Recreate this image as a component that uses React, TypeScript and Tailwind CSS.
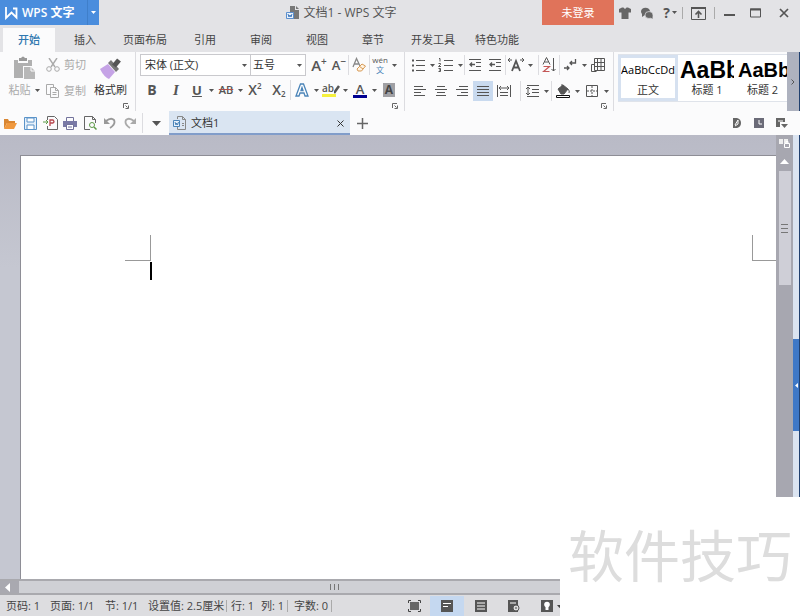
import React, { useState } from "react";

interface TabItem {
  label: string;
  wide?: boolean;
}

const TABS: TabItem[] = [
  { label: "开始" },
  { label: "插入" },
  { label: "页面布局", wide: true },
  { label: "引用" },
  { label: "审阅" },
  { label: "视图" },
  { label: "章节" },
  { label: "开发工具", wide: true },
  { label: "特色功能", wide: true },
];

const Svg: React.FC<{ w?: number; h?: number; children: React.ReactNode }> = ({
  w = 16,
  h = 16,
  children,
}) => (
  <svg
    width={w}
    height={h}
    viewBox={`0 0 ${w} ${h}`}
    fill="none"
    stroke="currentColor"
    className="shrink-0"
    aria-hidden="true"
  >
    {children}
  </svg>
);

const Caret = () => (
  <Svg w={5} h={3}>
    <path d="M0 0h5L2.5 3z" fill="currentColor" stroke="none" />
  </Svg>
);

const Divider = () => <span className="h-5 w-px shrink-0 bg-[#dcdce0]" />;

const Tool: React.FC<{
  label: string;
  drop?: boolean;
  active?: boolean;
  children: React.ReactNode;
}> = ({ label, drop, active, children }) => (
  <button
    aria-label={label}
    title={label}
    className={`flex h-5 shrink-0 items-center ${active ? "bg-[#c9daef]" : ""}`}
  >
    <span className="flex w-5 items-center justify-center">{children}</span>
    {drop && (
      <span className="flex w-2 justify-center">
        <Caret />
      </span>
    )}
  </button>
);

const Launcher: React.FC<{ label: string }> = ({ label }) => (
  <button aria-label={label} className="absolute right-1.5 bottom-0.5 text-[#666]">
    <Svg w={6} h={6}>
      <path d="M.5 5V.5H5M2.5 2.5l2 2M5.5 2.5v3h-3" />
    </Svg>
  </button>
);

// horizontal strokes, each given as x1, x2, y
const Lines: React.FC<{ rows: number[][] }> = ({ rows }) => (
  <Svg>
    <path d={rows.map(([a, b, y]) => `M${a} ${y}H${b}`).join("")} />
  </Svg>
);

function TitleBar() {
  return (
    <header className="flex h-[25px] shrink-0 items-center text-[#555]">
      <button className="flex w-[87px] items-center gap-1 self-stretch bg-[#4a8ddd] pl-1 text-[12px] font-semibold text-white">
        <Svg w={14} h={14}>
          <path d="M2 1v11l5.500-5.500 5 5V2.500H9" strokeWidth="1.800" />
        </Svg>
        WPS 文字
      </button>
      <button
        aria-label="主菜单"
        className="flex w-3 items-center justify-center self-stretch border-l border-[#3f7fca] bg-[#4a8ddd] text-white"
      >
        <Caret />
      </button>
      <div className="flex flex-1 items-center justify-center gap-1 pl-10 text-[12px] leading-4">
        <Svg w={15} h={14}>
          <path d="M5 0h5v4h4v9H5z" fill="#777" stroke="none" />
          <path d="M11 0l3 3h-3z" fill="#777" stroke="none" />
          <path d="M1.500 6.500h7v6h-7z" fill="#eaf2fb" stroke="#5b8fce" />
          <path d="M3 8l1 3 1-2 1 2 1-3" stroke="#3f78bd" />
        </Svg>
        <h1>文档1 - WPS 文字</h1>
      </div>
      <div className="flex items-center justify-end self-stretch">
        <button className="w-[72px] self-stretch bg-[#e0735a] text-[11px] text-white">
          未登录
        </button>
        <button aria-label="皮肤" className="flex w-[22px] justify-center">
          <Svg w={12} h={12}>
            <path
              d="M0 2l3-1.500h1.500Q6 3 7.500.5H9L12 2v3.500h-2.500V12h-7V5.500H0z"
              fill="#666"
              stroke="none"
            />
          </Svg>
        </button>
        <button aria-label="反馈" className="flex w-[22px] justify-center">
          <Svg w={12} h={12}>
            <ellipse cx="4.500" cy="4.500" rx="4.500" ry="3.800" fill="#666" stroke="none" />
            <path d="M1 6v4l3-2z" fill="#666" stroke="none" />
            <ellipse cx="8" cy="8" rx="4" ry="3.500" fill="#666" stroke="#e3e3e6" strokeWidth=".7" />
            <path d="M9 10l2.500 2V8z" fill="#666" stroke="none" />
          </Svg>
        </button>
        <button
          aria-label="帮助"
          className="flex w-6 items-center justify-center gap-0.5 text-[14px] font-bold"
        >
          ?
          <Caret />
        </button>
        <span className="h-3 w-px bg-[#aaa]" />
        <button aria-label="隐藏功能区" className="flex w-[31px] justify-center">
          <Svg w={15} h={14}>
            <path d="M.5 1.500h14v12H.5z" />
            <path d="M0 2h15" strokeWidth="2" />
            <path d="M7.500 12V6M4.500 8.500l3-3 3 3" strokeWidth="1.600" />
          </Svg>
        </button>
        <span className="h-3 w-px bg-[#aaa]" />
        <button aria-label="最小化" className="flex w-7 justify-center">
          <Svg w={11} h={12}>
            <path d="M0 8h11" strokeWidth="2" />
          </Svg>
        </button>
        <button aria-label="最大化" className="flex w-6 justify-center">
          <Svg w={11} h={10}>
            <path d="M.5 1h10v8H.5z" />
            <path d="M0 1.500h11" strokeWidth="2" />
          </Svg>
        </button>
        <button aria-label="关闭" className="flex w-[33px] justify-center">
          <Svg w={10} h={10}>
            <path d="M1 1l8 8M9 1L1 9" strokeWidth="1.700" />
          </Svg>
        </button>
      </div>
    </header>
  );
}

function ClipboardGroup() {
  return (
    <section
      aria-label="剪贴板"
      className="relative flex w-[136px] shrink-0 border-r border-[#dcdce0] pl-0.5 text-[#aaa]"
    >
      <button className="flex w-11 flex-col items-center gap-0.5 pt-1">
        <Svg w={22} h={24}>
          <path d="M1 4h4v3h10V4h4v6h-9v12H1z" fill="#b0b0b0" stroke="none" />
          <path d="M6 5V2h2q2-3 4 0h2v3z" fill="#999" stroke="none" />
          <path d="M11 11h7l4 4v8H11z" fill="#b8b8b8" stroke="none" />
          <path d="M18 11v4h4" stroke="#fbfbfc" />
        </Svg>
        <span className="flex items-center gap-1">
          粘贴
          <span className="text-[#555]">
            <Caret />
          </span>
        </span>
      </button>
      <div className="flex flex-col gap-1.5 pt-[3px]">
        <button className="flex h-5 items-center gap-1">
          <Svg w={14} h={14}>
            <path d="M3 0l6 9M11 0L5 9" strokeWidth="1.400" />
            <circle cx="3" cy="11" r="2.300" />
            <circle cx="11" cy="11" r="2.300" />
          </Svg>
          剪切
        </button>
        <button className="flex h-5 items-center gap-1">
          <Svg w={14} h={14}>
            <path d="M4 10.500H.5V.5h7V3" />
            <path d="M4.500 3.500h5l3 3v7h-8zM9.500 3.500v3h3M6.500 8.500h4M6.500 10.500h4" />
          </Svg>
          复制
        </button>
      </div>
      <button className="flex flex-1 flex-col items-center gap-0.5 pt-1 text-[#333]">
        <Svg w={22} h={24}>
          <path d="M0 13l8-5 7 8-6 7q-5-2-9-10z" fill="#c5a3e6" stroke="none" />
          <path d="M8 7l3-3 8 9-3 3z" fill="#777" stroke="none" />
          <path d="M14 10l5-6" stroke="#555" strokeWidth="5" />
        </Svg>
        格式刷
      </button>
      <Launcher label="剪贴板设置" />
    </section>
  );
}

function FontGroup() {
  return (
    <section
      aria-label="字体"
      className="relative flex w-[269px] shrink-0 flex-col gap-1 border-r border-[#dcdce0] pt-0.5 pl-1"
    >
      <div className="flex items-center">
        <label className="relative flex items-center">
          <select
            aria-label="字体名称"
            className="h-[22px] w-[111px] appearance-none border border-[#c9c9cd] bg-white px-1 text-[11px] text-[#333]"
          >
            <option>宋体 (正文)</option>
            <option>黑体</option>
          </select>
          <span className="pointer-events-none absolute right-1">
            <Caret />
          </span>
        </label>
        <label className="relative flex items-center">
          <select
            aria-label="字号"
            className="h-[22px] w-[55px] appearance-none border border-l-0 border-[#c9c9cd] bg-white px-0.5 text-[11px] text-[#333]"
          >
            <option>五号</option>
            <option>四号</option>
          </select>
          <span className="pointer-events-none absolute right-1">
            <Caret />
          </span>
        </label>
        <Tool label="增大字号">
          <span className="ml-1.5 flex items-start text-[15px] leading-4 font-semibold">
            A<sup className="top-0 text-[10px] leading-2">+</sup>
          </span>
        </Tool>
        <Tool label="减小字号">
          <span className="ml-1.5 flex items-start text-[13px] leading-4 font-semibold">
            A<sup className="top-0 text-[10px] leading-2">−</sup>
          </span>
        </Tool>
        <span className="w-0.5" />
        <Divider />
        <Tool label="清除格式">
          <Svg w={14} h={16}>
            <path d="M1 10L4.500 1.500 8 9M2.500 7h4" stroke="#888" strokeWidth="1.300" />
            <path d="M5 12l5-5 3.500 2-4 5H6z" fill="#fff4e4" stroke="#d79a55" />
            <path d="M7 9l4 3" stroke="#d79a55" />
          </Svg>
        </Tool>
        <Divider />
        <Tool label="拼音指南" drop>
          <span className="flex flex-col text-center text-[8px]">
            <span className="leading-[9px]">wén</span>
            <span className="leading-[11px] text-[#4b84b8]">文</span>
          </span>
        </Tool>
      </div>
      <div className="flex items-center gap-px pl-0.5">
        <Tool label="加粗">
          <b className="text-[14px]">B</b>
        </Tool>
        <span className="w-0.5" />
        <Tool label="倾斜">
          <i className="font-['Liberation_Serif'] text-[15px] font-semibold">I</i>
        </Tool>
        <Tool label="下划线" drop>
          <u className="text-[13px] font-bold">U</u>
        </Tool>
        <Tool label="删除线" drop>
          <s className="text-[11px] font-semibold decoration-[#b0504c]">AB</s>
        </Tool>
        <Tool label="上标">
          <span className="flex items-start text-[14px] leading-4 font-semibold">
            X<span className="text-[8px] leading-2">2</span>
          </span>
        </Tool>
        <span className="w-0.5" />
        <Tool label="下标">
          <span className="flex items-end text-[14px] leading-4 font-semibold">
            X<span className="text-[8px] leading-2">2</span>
          </span>
        </Tool>
        <Divider />
        <Tool label="文字效果" drop>
          <Svg w={14} h={14}>
            <path
              d="M1 13L5.500 1h3L13 13h-3L9 10H5l-1 3zM6 7.500h2L7 4.500z"
              stroke="#4b84b8"
              strokeWidth="1.300"
              fill="#fff"
            />
          </Svg>
        </Tool>
        <Tool label="突出显示" drop>
          <span className="flex w-[18px] flex-col text-[10px] leading-[11px] font-semibold">
            <span className="flex items-center">
              ab
              <Svg w={6} h={11}>
                <path d="M0 10L5 3" strokeWidth="2.500" />
              </Svg>
            </span>
            <span className="h-[3px] w-3.5 bg-[#f5f03c]" />
          </span>
        </Tool>
        <Tool label="字体颜色" drop>
          <span className="flex w-3.5 flex-col text-center text-[13px] leading-3 font-semibold">
            A<span className="h-[3px] bg-[#000090]" />
          </span>
        </Tool>
        <Tool label="字符底纹">
          <span className="flex h-3.5 w-3 items-center justify-center bg-[#a0a0a4] text-[12px] font-bold text-[#444]">
            A
          </span>
        </Tool>
      </div>
      <Launcher label="字体设置" />
    </section>
  );
}

function ParagraphGroup() {
  return (
    <section
      aria-label="段落"
      className="relative flex w-[209px] shrink-0 flex-col gap-1.5 border-r border-[#dcdce0] pt-[3px] pl-[3px]"
    >
      <div className="flex items-center">
        <Tool label="项目符号" drop>
          <Svg>
            <path d="M6 3.500h9M6 8.500h9M6 13.500h9" />
            <path d="M2 3.500h2M2 8.500h2M2 13.500h2" strokeWidth="2" />
          </Svg>
        </Tool>
        <Tool label="编号" drop>
          <Svg>
            <path d="M6 3.500h9M6 8.500h9M6 13.500h9" />
            <path d="M1 1.500h1v3M.5 6.500h2v1l-2 2h2.500M.5 11.500h2v3h-2M1 13h1" />
          </Svg>
        </Tool>
        <Divider />
        <Tool label="减少缩进">
          <Svg w={12} h={12}>
            <path d="M0 .5h12M7 3.500h5M7 7.500h5M0 11.500h12" />
            <path d="M1 5.500h5M3 3.500l-2 2 2 2" strokeWidth="1.300" />
          </Svg>
        </Tool>
        <Tool label="增加缩进">
          <Svg w={12} h={12}>
            <path d="M0 .5h12M7 3.500h5M7 7.500h5M0 11.500h12" />
            <path d="M1 5.500h5M3 3.500l-2 2 2 2" strokeWidth="1.300" />
          </Svg>
        </Tool>
        <Divider />
        <Tool label="字符缩放" drop>
          <Svg>
            <path d="M4 14l4-10 4 10M5.500 10.500h5" strokeWidth="1.800" />
            <path d="M0 3h4M2 1L0 3l2 2M12 3h4M14 1l2 2-2 2" />
          </Svg>
        </Tool>
        <span className="w-1" />
        <Divider />
        <Tool label="排序">
          <Svg w={14} h={16}>
            <path d="M1 7.500L4.500.5 8 7.500M2.500 5h4" />
            <path d="M1.500 9.500h6l-6 5h6" stroke="#c45757" strokeWidth="1.200" />
            <path d="M11.500 1v13M9.500 12l2 2 2-2" />
          </Svg>
        </Tool>
        <Divider />
        <Tool label="换行标记" drop>
          <Svg w={14} h={14}>
            <path d="M12.500 1v4H7M9 3L7 5l2 2M1 10h5M4 8l2 2-2 2" strokeWidth="1.300" />
          </Svg>
        </Tool>
        <Tool label="插入表格">
          <Svg w={14} h={14}>
            <path d="M3.500.5h10v12h-10zM6.500 0v13M10 0v13M3 4.500h11M3 8.500h11M3 6.500H.5v7h5" />
          </Svg>
        </Tool>
      </div>
      <div className="flex items-center gap-px pl-0.5">
        <Tool label="左对齐">
          <Lines rows={[[2, 11, 3.5], [2, 14, 6.5], [2, 9, 9.5], [2, 13, 12.5]]} />
        </Tool>
        <Tool label="居中">
          <Lines rows={[[4, 12, 3.5], [2, 14, 6.5], [4, 12, 9.5], [3, 13, 12.5]]} />
        </Tool>
        <Tool label="右对齐">
          <Lines rows={[[5, 14, 3.5], [2, 14, 6.5], [7, 14, 9.5], [3, 14, 12.5]]} />
        </Tool>
        <Tool label="两端对齐" active>
          <Lines rows={[[2, 14, 3.5], [2, 14, 6.5], [2, 14, 9.5], [2, 14, 12.5]]} />
        </Tool>
        <Tool label="分散对齐">
          <Svg>
            <path d="M1.500 2v12M14.500 2v12M3 5h10M5 3L3 5l2 2M11 3l2 2-2 2M4 9.500h8M4 12.500h8" />
          </Svg>
        </Tool>
        <span className="w-1" />
        <Divider />
        <Tool label="行距" drop>
          <Svg>
            <path d="M3 2.500h12M8 6.500h7M8 9.500h7M3 13.500h12M4 4v8M2 6l2-2 2 2M2 10l2 2 2-2" />
          </Svg>
        </Tool>
        <Divider />
        <Tool label="底纹" drop>
          <Svg>
            <path d="M3 6l5-4 5 4-4 5H6z" fill="#555" />
            <path d="M13 6q2 2 1 4M7 1v4" />
            <path d="M1.500 12.500h13v2h-13z" stroke="#111" fill="#fff" />
          </Svg>
        </Tool>
        <Tool label="边框" drop>
          <Svg w={12} h={12}>
            <path d="M.5.5h11v11H.5z" />
            <path d="M6 1v10M1 6h10" strokeDasharray="2 1" />
          </Svg>
        </Tool>
      </div>
      <Launcher label="段落设置" />
    </section>
  );
}

function StyleGallery() {
  return (
    <section aria-label="样式" className="flex min-w-0 flex-1 pt-0.5 pl-1 text-[#333]">
      <div className="flex h-12 min-w-0 flex-1 border-y border-[#dfe3ea] bg-white">
        <button className="flex w-[60px] shrink-0 flex-col items-center overflow-hidden border-3 border-[#d6e1f0] bg-white">
          <span className="flex h-[26px] items-center text-[11px] whitespace-nowrap text-black">
            AaBbCcDd
          </span>
          <span className="leading-4">正文</span>
        </button>
        <button className="flex w-[56px] shrink-0 flex-col items-center py-[3px] pl-0.5">
          <span className="flex h-[26px] w-full items-center overflow-hidden font-['Liberation_Sans'] text-[23px] font-bold whitespace-nowrap text-black">
            AaBb
          </span>
          <span className="leading-4">标题 1</span>
        </button>
        <button className="flex min-w-0 flex-1 flex-col items-center overflow-hidden py-[3px] pl-1">
          <span className="flex h-[26px] w-full items-center overflow-hidden font-['Liberation_Sans'] text-[20px] font-bold whitespace-nowrap text-black">
            AaBb
          </span>
          <span className="leading-4">标题 2</span>
        </button>
      </div>
    </section>
  );
}

function QuickBar() {
  return (
    <div className="flex h-6 shrink-0 items-center bg-[#fbfbfc] text-[#666]">
      <Tool label="打开">
        <Svg w={14} h={13}>
          <path d="M1 12V2h4l1 2h6v2H4z" fill="#d98632" stroke="none" />
          <path d="M1 12l3-6h10l-3 6z" fill="#f0993f" stroke="none" />
        </Svg>
      </Tool>
      <Tool label="保存">
        <Svg w={13} h={13}>
          <path d="M.5.5h12v12H.5z" stroke="#5a93c9" fill="#e6f0fa" />
          <path d="M3 1h7v4H3zM3 12V8h7v4" stroke="#5a93c9" fill="#fff" />
        </Svg>
      </Tool>
      <Tool label="输出为PDF">
        <Svg w={15} h={14}>
          <path d="M4.500 4V.5h7l3 3v10h-10V10" />
          <path d="M7 10V4h3q2 2 0 3H7" stroke="#b8474e" strokeWidth="1.300" />
          <path d="M0 6h5M3 4l2 2-2 2" stroke="#5d9a46" />
        </Svg>
      </Tool>
      <Tool label="打印">
        <Svg w={14} h={13}>
          <path d="M3.500 4V.5h7V4" stroke="#73739c" />
          <path d="M0 4h14v6H0z" fill="#7a7aa6" stroke="none" />
          <path d="M3.500 7.500h7v5h-7z" fill="#fff" stroke="#73739c" />
          <path d="M5 10h4" stroke="#73739c" />
        </Svg>
      </Tool>
      <Tool label="打印预览">
        <Svg w={13} h={14}>
          <path d="M6 13.500H.5V.5h8l3 3V7M8.500.5v3h3" />
          <circle cx="8" cy="9" r="2.500" stroke="#5d9a46" />
          <path d="M10 11l2.500 2.500" stroke="#5d9a46" strokeWidth="1.500" />
        </Svg>
      </Tool>
      <Tool label="撤销">
        <Svg w={12} h={12}>
          <path d="M2 4q5-4 8-1 2 4-4 8" stroke="#999" strokeWidth="1.800" />
          <path d="M0 1v6h6z" fill="#999" stroke="none" />
        </Svg>
      </Tool>
      <Tool label="恢复">
        <Svg w={12} h={12}>
          <path d="M10 4Q5 0 2 3q-2 4 4 8" stroke="#aaa" strokeWidth="1.800" />
          <path d="M12 1v6H6z" fill="#aaa" stroke="none" />
        </Svg>
      </Tool>
      <span className="w-0.5" />
      <Divider />
      <button aria-label="自定义快速访问" className="flex w-[26px] justify-center">
        <Svg w={9} h={5}>
          <path d="M0 0h9L4.500 5z" fill="#555" stroke="none" />
        </Svg>
      </button>
      <div className="flex w-[181px] items-center gap-1 self-stretch border-b-2 border-[#819dca] bg-[#dae5f2] pt-0.5 pr-1 pl-1 text-[#333]">
        <Svg w={14} h={14}>
          <path d="M4.500 3V.5h5l3 3v10h-8V11M9.500.5v3h3M9 7.500h2M9 9.500h2" stroke="#888" />
          <path d="M.5 4.500h6v6h-6z" fill="#e8f1fb" stroke="#4b84b8" />
          <path d="M2 6l1 3 .7-2 .8 2 1-3" stroke="#4b84b8" />
        </Svg>
        <span className="flex-1">文档1</span>
        <button aria-label="关闭文档" className="flex w-3 justify-center">
          <Svg w={7} h={7}>
            <path d="M.5.5l6 6M6.500.5l-6 6" />
          </Svg>
        </button>
      </div>
      <button aria-label="新建文档" className="flex w-6 justify-center">
        <Svg w={11} h={11}>
          <path d="M5.500 0v11M0 5.500h11" strokeWidth="1.500" />
        </Svg>
      </button>
      <div className="ml-auto flex gap-3 pr-3">
        <button aria-label="文档漫游">
          <Svg w={10} h={10}>
            <path d="M1 0h4q4 1 4 5t-4 5H1z" fill="#666" stroke="none" />
            <path d="M3 7l3-5v4l-3 2" stroke="#fff" />
          </Svg>
        </button>
        <button aria-label="历史版本">
          <Svg w={10} h={10}>
            <path d="M0 0h10v10H0z" fill="#6b6b78" stroke="none" />
            <path d="M5 2v4h3" stroke="#fff" />
          </Svg>
        </button>
        <button aria-label="窗口列表">
          <Svg w={12} h={10}>
            <path d="M0 0h9v4H4v5H0z" fill="#666" stroke="none" />
            <path d="M5 6h7L8.500 10z" fill="#666" stroke="none" />
            <path d="M2 3h5" stroke="#fff" />
          </Svg>
        </button>
      </div>
    </div>
  );
}

function Workspace() {
  return (
    <div className="flex min-h-0 flex-1">
      <div className="flex min-w-0 flex-1 flex-col">
        <main className="flex min-h-0 flex-1 bg-[#c0c2cd] bg-linear-to-b from-[#b9bac6] to-[#c5c7d1] to-30% pt-5 pl-5">
          <div
            role="textbox"
            aria-label="文档正文"
            tabIndex={0}
            className="relative flex-1 border-t border-l border-[#8e8e96] bg-white px-[129px] pt-[106px]"
          >
            <span className="absolute top-[79px] left-[104px] h-[26px] w-[26px] border-r border-b border-[#999]" />
            <span className="absolute top-[79px] right-0 h-[26px] w-6 border-b border-l border-[#999]" />
            <span className="block h-[18px] w-0.5 bg-black" />
          </div>
        </main>
        <div className="flex h-4 shrink-0 border-y-2 border-[#a9a9ae] bg-[#cfd0d5]">
          <button
            aria-label="向左滚动"
            className="flex w-[19px] items-center justify-center bg-[#a9a9b0] pr-1"
          >
            <Svg w={5} h={9}>
              <path d="M5 0v9L0 4.500z" fill="#fff" stroke="none" />
            </Svg>
          </button>
          <div className="flex flex-1 items-center pl-[311px] text-[#777]">
            <Svg w={9} h={6}>
              <path d="M.5 0v6M4.500 0v6M8.500 0v6" />
            </Svg>
          </div>
        </div>
      </div>
      <div className="flex w-[17px] shrink-0 flex-col items-center bg-[#a7a7b0]">
        <button aria-label="选择浏览对象" className="flex h-4 items-center">
          <Svg w={11} h={10}>
            <path d="M0 1h4v5H0zM5 1h4v4H5z" fill="#eee" stroke="none" />
            <path d="M5.500 5.500h5v4h-5z" fill="#a7a7b0" stroke="#fff" />
            <path d="M7 5V3.500h2V5" stroke="#fff" />
          </Svg>
        </button>
        <button aria-label="向上滚动" className="flex h-5 items-center">
          <Svg w={9} h={5}>
            <path d="M4.500 0L9 5H0z" fill="#fff" stroke="none" />
          </Svg>
        </button>
        <div className="flex h-[114px] w-3 items-center justify-center bg-[#cfcfd7] text-[#777]">
          <Svg w={7} h={9}>
            <path d="M0 .5h7M0 4.500h7M0 8.500h7" />
          </Svg>
        </div>
      </div>
      <aside className="flex w-[7px] shrink-0 flex-col border-r border-[#20406f] bg-[#dbe4f1] pt-[204px]">
        <button
          aria-label="展开任务窗格"
          className="flex h-[92px] items-center justify-center bg-[#3f78c6]"
        >
          <Svg w={3} h={5}>
            <path d="M3 0v5L0 2.500z" fill="#fff" stroke="none" />
          </Svg>
        </button>
      </aside>
    </div>
  );
}

function StatusBar() {
  return (
    <footer className="flex h-[21px] shrink-0 items-center bg-[#dddde0] pt-px text-[#444]">
      <div className="flex w-[398px] shrink-0 items-center pl-1.5 whitespace-nowrap">
        <span className="w-11">页码: 1</span>
        <span className="w-[55px]">页面: 1/1</span>
        <span className="w-[43px]">节: 1/1</span>
        <span className="w-[78px]">设置值: 2.5厘米</span>
        <span className="h-3 w-px bg-[#aaa]" />
        <span className="w-[34px] pl-1">行: 1</span>
        <span className="w-[26px]">列: 1</span>
        <span className="h-3 w-px bg-[#aaa]" />
        <span className="w-[43px] pl-1.5">字数: 0</span>
        <span className="h-3 w-px bg-[#aaa]" />
      </div>
      <button aria-label="全屏显示" className="flex w-8 justify-center">
        <Svg w={13} h={12}>
          <path d="M2 2h9v8H2z" fill="#666" stroke="none" />
          <path d="M.5 3V.5H3M10 .5h2.500V3M12.500 9v2.500H10M3 11.500H.5V9" />
        </Svg>
      </button>
      <button
        aria-label="页面视图"
        className="flex w-[34px] items-center justify-center self-stretch bg-[#c5d8f0]"
      >
        <Svg w={12} h={12}>
          <path d="M0 0h12v12H0z" fill="#555" stroke="none" />
          <path d="M2 3.500h8M2 6.500h5" stroke="#fff" />
        </Svg>
      </button>
      <button aria-label="大纲视图" className="flex w-[34px] justify-center">
        <Svg w={12} h={12}>
          <path d="M0 0h12v12H0z" fill="#555" stroke="none" />
          <path d="M2 3h8M2 6h8M2 9h8" stroke="#fff" />
        </Svg>
      </button>
      <button aria-label="Web版式" className="flex w-8 justify-center">
        <Svg w={12} h={12}>
          <path d="M0 0h10v12H0z" fill="#555" stroke="none" />
          <path d="M2 3h6" stroke="#fff" />
          <circle cx="8" cy="8" r="3" fill="#ddd" stroke="#555" />
          <path d="M7 8h2" />
        </Svg>
      </button>
      <button aria-label="护眼模式" className="flex items-center gap-1 pl-[11px]">
        <Svg w={12} h={12}>
          <path d="M0 0h12v12H0z" fill="#555" stroke="none" />
          <circle cx="6" cy="4.500" r="2.800" fill="#fff" stroke="none" />
          <path d="M4.500 6h3v4h-3z" fill="#fff" stroke="none" />
        </Svg>
        <Caret />
      </button>
    </footer>
  );
}

export default function App() {
  const [tab, setTab] = useState("开始");

  return (
    <div className="relative flex h-screen flex-col overflow-hidden bg-[#e3e3e6] font-['Open_Sans','Noto_Sans_CJK_SC',sans-serif] text-[11px] leading-4 text-[#555]">
      <TitleBar />
      <nav className="flex h-[27px] shrink-0 items-end pl-[3px]">
        {TABS.map((t) => (
          <button
            key={t.label}
            onClick={() => setTab(t.label)}
            className={`h-6 ${t.wide ? "w-16" : "w-14"} ${
              tab === t.label
                ? "mr-0.5 w-[52px] bg-[#fbfbfc] font-medium text-[#2f78b0]"
                : "text-[#444]"
            }`}
          >
            {t.label}
          </button>
        ))}
      </nav>
      <div className="flex h-[59px] shrink-0 bg-[#fbfbfc]">
        <ClipboardGroup />
        <FontGroup />
        <ParagraphGroup />
        <StyleGallery />
        <button
          aria-label="展开样式"
          className="flex w-[13px] shrink-0 items-center justify-center border-r border-[#20406f] bg-[#aeb2bf]"
        >
          <Svg w={4} h={6}>
            <path d="M.5.5L3 3 .5 5.500" />
          </Svg>
        </button>
      </div>
      <QuickBar />
      <Workspace />
      <StatusBar />
      <div className="absolute right-0 bottom-0 flex h-[119px] w-[240px] items-center justify-center bg-white pb-2 font-['Noto_Sans_CJK_SC',sans-serif] text-[56px] text-[#dddddd]">
        软件技巧
      </div>
    </div>
  );
}
